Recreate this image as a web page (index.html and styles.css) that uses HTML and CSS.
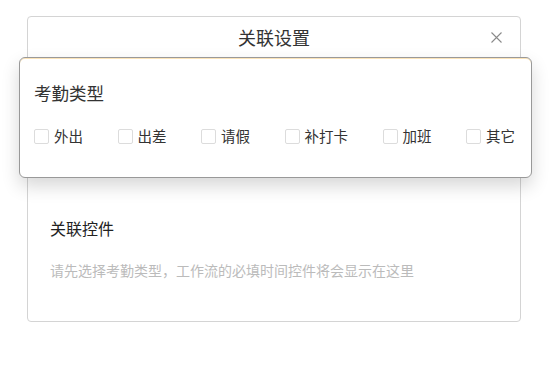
FILE: index.html
```html
<!DOCTYPE html>
<html lang="zh-CN">
<head>
  <meta charset="UTF-8">
  <meta name="viewport" content="width=device-width, initial-scale=1">
  <title>关联设置</title>
  <link rel="stylesheet" href="styles.css">
</head>
<body>
  <div class="modal">
    <div class="modal-header">
      <span class="modal-title">关联设置</span>
      <span class="close">
        <svg width="11" height="11" viewBox="0 0 11 11"><path d="M0.5 0.5L10.5 10.5M10.5 0.5L0.5 10.5" stroke="#8a8a8a" stroke-width="1.1" fill="none"/></svg>
      </span>
    </div>

    <div class="popover">
      <div class="popover-title">考勤类型</div>
      <div class="options">
        <label class="option"><span class="box"></span>外出</label>
        <label class="option"><span class="box"></span>出差</label>
        <label class="option"><span class="box"></span>请假</label>
        <label class="option"><span class="box"></span>补打卡</label>
        <label class="option"><span class="box"></span>加班</label>
        <label class="option"><span class="box"></span>其它</label>
      </div>
    </div>

    <div class="modal-body">
      <div class="section-title">关联控件</div>
      <div class="hint">请先选择考勤类型，工作流的必填时间控件将会显示在这里</div>
    </div>
  </div>
</body>
</html>
```

FILE: styles.css
```css
body {
  margin: 0;
  padding: 16px 0 0 27px;
  background: #fff;
  font-family: "Noto Sans CJK SC", "Noto Sans", sans-serif;
  color: #333;
}
.modal {
  position: relative;
  width: 492px;
  border: 1px solid #d4d4d4;
  border-radius: 4px;
  background: #fff;
}
.modal-header {
  height: 40px;
  display: flex;
  align-items: center;
  justify-content: center;
  border-bottom: 1px solid #eee;
  position: relative;
}
.modal-title {
  font-size: 18px;
  color: #333;
  line-height: 24px;
}
.close {
  position: absolute;
  right: 18px;
  top: 15px;
  display: flex;
}
.popover {
  position: absolute;
  left: -9px;
  top: 40px;
  width: 481px;
  padding: 24px 16px 31px 14px;
  background: #fff;
  border: 1px solid #999;
  border-radius: 6px;
  box-shadow: inset 0 1px 0 #fbe3b8, 0 8px 18px rgba(0,0,0,0.16);
}
.popover-title {
  font-size: 17.5px;
  line-height: 22px;
  color: #333;
}
.options {
  display: flex;
  justify-content: space-between;
  margin-top: 22px;
}
.option {
  display: flex;
  align-items: center;
  gap: 5px;
  font-size: 14.5px;
  line-height: 20px;
  color: #333;
}
.box {
  width: 13px;
  height: 13px;
  border: 1px solid #dcdcdc;
  border-radius: 2px;
  background: #fff;
}
.modal-body {
  padding: 159px 22px 41px 22px;
}
.section-title {
  font-size: 16px;
  line-height: 22px;
  color: #222;
}
.hint {
  margin-top: 21px;
  font-size: 14px;
  line-height: 20px;
  color: #bbb;
}
```
